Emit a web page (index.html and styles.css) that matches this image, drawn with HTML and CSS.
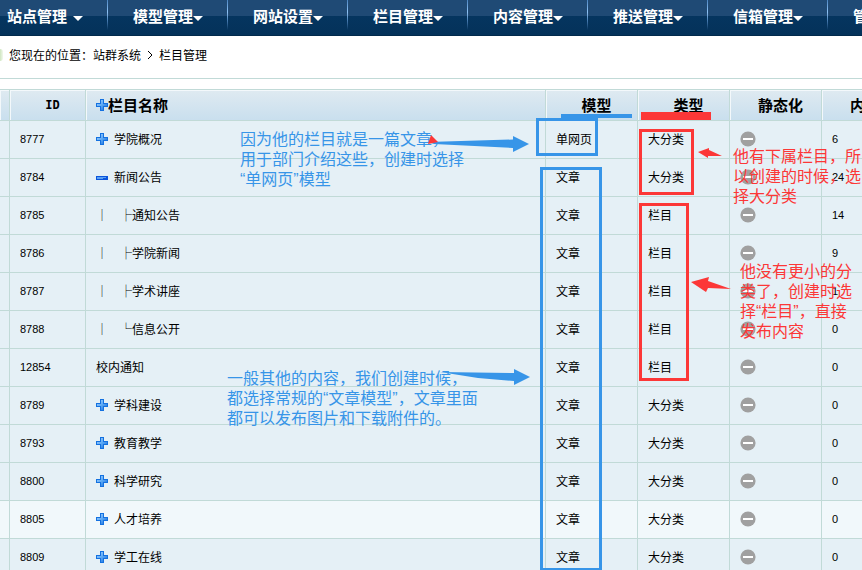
FILE: index.html
```
<!DOCTYPE html>
<html lang="zh-CN">
<head>
<meta charset="utf-8">
<title>栏目管理</title>
<link rel="stylesheet" href="styles.css">
</head>
<body>
<svg class="defs" width="0" height="0" aria-hidden="true">
  <defs>
    <linearGradient id="blue" x1="0" y1="0" x2="1" y2="1"><stop offset="0" stop-color="#a5d3ff"/><stop offset="0.5" stop-color="#5aa8f5"/><stop offset="1" stop-color="#1268d8"/></linearGradient>
    <symbol id="plus" viewBox="0 0 12 12"><path fill="#1471e0" d="M4 0h4v4h4v4H8v4H4V8H0V4h4z"/><path fill="url(#blue)" d="M5 1h2v4h4v2H7v4H5V7H1V5h4z"/></symbol>
    <symbol id="minus" viewBox="0 0 12 12"><path fill="#0b55dc" d="M0 5h12v4H0z"/><path fill="#5ba2f3" d="M1 6h9v1H7v1H1z"/></symbol>
    <symbol id="off" viewBox="0 0 16 16"><circle cx="8" cy="8" r="7.6" fill="#a0a0a0"/><path fill="#fff" d="M3 7h10v2H3z"/></symbol>
  </defs>
</svg>
<nav class="menu">
  <a class="first" href="#">站点管理<i></i></a>
  <a href="#">模型管理<i></i></a>
  <a href="#">网站设置<i></i></a>
  <a href="#">栏目管理<i></i></a>
  <a href="#">内容管理<i></i></a>
  <a href="#">推送管理<i></i></a>
  <a href="#">信箱管理<i></i></a>
  <a href="#">管理</a>
</nav>
<div class="crumbs"><span class="leaf"></span><span>您现在的位置：站群系统</span><svg width="6" height="10" viewBox="0 0 6 10"><path d="M1 1l4 4-4 4" fill="none" stroke="#000"/></svg><span>栏目管理</span></div>
<main>
<table>
  <colgroup><col class="c-edge"><col class="c-id"><col class="c-name"><col class="c-std"><col class="c-std"><col class="c-std"><col></colgroup>
  <thead>
    <tr><th></th><th class="id">ID</th><th class="name"><div class="title"><svg class="ico"><use href="#plus"/></svg>栏目名称</div></th><th>模型</th><th>类型</th><th>静态化</th><th class="last">内容数</th></tr>
  </thead>
  <tbody>
    <tr><td></td><td class="num">8777</td><td><div class="node"><svg class="ico"><use href="#plus"/></svg>学院概况</div></td><td>单网页</td><td>大分类</td><td><svg class="off"><use href="#off"/></svg></td><td class="num">6</td></tr>
    <tr><td></td><td class="num">8784</td><td><div class="node"><svg class="ico"><use href="#minus"/></svg>新闻公告</div></td><td>文章</td><td>大分类</td><td><svg class="off"><use href="#off"/></svg></td><td class="num">24</td></tr>
    <tr><td></td><td class="num">8785</td><td><b>│　├</b>通知公告</td><td>文章</td><td>栏目</td><td><svg class="off"><use href="#off"/></svg></td><td class="num">14</td></tr>
    <tr><td></td><td class="num">8786</td><td><b>│　├</b>学院新闻</td><td>文章</td><td>栏目</td><td><svg class="off"><use href="#off"/></svg></td><td class="num">9</td></tr>
    <tr><td></td><td class="num">8787</td><td><b>│　├</b>学术讲座</td><td>文章</td><td>栏目</td><td><svg class="off"><use href="#off"/></svg></td><td class="num">1</td></tr>
    <tr><td></td><td class="num">8788</td><td><b>│　└</b>信息公开</td><td>文章</td><td>栏目</td><td><svg class="off"><use href="#off"/></svg></td><td class="num">0</td></tr>
    <tr><td></td><td class="num">12854</td><td>校内通知</td><td>文章</td><td>栏目</td><td><svg class="off"><use href="#off"/></svg></td><td class="num">0</td></tr>
    <tr><td></td><td class="num">8789</td><td><div class="node"><svg class="ico"><use href="#plus"/></svg>学科建设</div></td><td>文章</td><td>大分类</td><td><svg class="off"><use href="#off"/></svg></td><td class="num">0</td></tr>
    <tr><td></td><td class="num">8793</td><td><div class="node"><svg class="ico"><use href="#plus"/></svg>教育教学</div></td><td>文章</td><td>大分类</td><td><svg class="off"><use href="#off"/></svg></td><td class="num">0</td></tr>
    <tr><td></td><td class="num">8800</td><td><div class="node"><svg class="ico"><use href="#plus"/></svg>科学研究</div></td><td>文章</td><td>大分类</td><td><svg class="off"><use href="#off"/></svg></td><td class="num">0</td></tr>
    <tr class="active"><td></td><td class="num">8805</td><td><div class="node"><svg class="ico"><use href="#plus"/></svg>人才培养</div></td><td>文章</td><td>大分类</td><td><svg class="off"><use href="#off"/></svg></td><td class="num">0</td></tr>
    <tr><td></td><td class="num">8809</td><td><div class="node"><svg class="ico"><use href="#plus"/></svg>学工在线</div></td><td>文章</td><td>大分类</td><td><svg class="off"><use href="#off"/></svg></td><td class="num">0</td></tr>
  </tbody>
</table>
</main>
<!-- Markup drawn over the table -->
<p class="note blue n1">因为他的栏目就是一篇文章，<br>用于部门介绍这些，创建时选择<br>“单网页”模型</p>
<p class="note blue n2">一般其他的内容，我们创建时候，<br>都选择常规的“文章模型”，文章里面<br>都可以发布图片和下载附件的。</p>
<p class="note red n3">他有下属栏目，所<br>以创建的时候，选<br>择大分类</p>
<p class="note red n4">他没有更小的分<br>类了，创建时选<br>择“栏目”，直接<br>发布内容</p>
<svg class="marks" width="862" height="571" viewBox="0 0 862 571" aria-hidden="true">
  <g fill="none" stroke="#3795e8" stroke-width="3"><path d="M537.5 119.500h59v35h-59z"/><path d="M541.500 168.500h59v401h-59z"/></g>
  <g fill="#3795e8"><path d="M561 114h71v4h-71z"/><path d="M428 142L513 139.500V136L529 144L513 152V148L434 144z"/><path d="M440 372L514 373V369L530 377L514 385V381L478 378z"/></g>
  <g fill="none" stroke="#fc3737" stroke-width="3"><path d="M640.500 130.500h52v63h-52z"/><path d="M640.500 204.500h47v175h-47z"/></g>
  <g fill="#fc3737"><path d="M641 112h70v8h-70z"/><path d="M428 144L431 135L438 142z"/><path d="M698 152L709 148V150L722 156L708 156V158z"/><path d="M691 282L709 277L708 281L731 289L708 288L706 292z"/></g>
</svg>
</body>
</html>
```
FILE: styles.css
```
html {
  overflow: hidden;
}
body {
  margin: 0;
  position: relative;
  background: #fff;
  color: #000;
  font: 12px/16px "Noto Sans CJK SC", sans-serif;
}
.defs {
  position: absolute;
}
.menu {
  display: flex;
  height: 36px;
  overflow: hidden;
  background: linear-gradient(#1f4a75 16px, #05355f 16px, #04325a 35px, #022a4c 35px);
}
.menu a {
  box-sizing: border-box;
  flex: 0 0 120px;
  display: flex;
  align-items: center;
  height: 32px;
  padding-left: 25px;
  color: #fff;
  font-size: 15px;
  font-weight: bold;
  text-decoration: none;
  white-space: nowrap;
  background: linear-gradient(#4d87c4, #8fc3f5 12px, #4b80b6 20px, transparent 30px) right top / 1px 30px no-repeat;
}
.menu .first {
  flex-basis: 108px;
  padding-left: 7px;
}
.menu i {
  margin-top: 4px;
  border: 5px solid transparent;
  border-top-color: #fff;
  border-bottom: 0;
}
.menu .first i {
  margin-left: 6px;
}
.crumbs {
  display: flex;
  align-items: center;
  gap: 6px;
  height: 38px;
  padding-bottom: 4px;
  border-bottom: 1px solid #c1dad7;
}
.leaf {
  width: 3px;
  height: 12px;
  border-radius: 0 6px 6px 0;
  background: linear-gradient(90deg, #cfe6c0, #f2f8ee);
}
main {
  margin-top: 10px;
  overflow: hidden;
}
table {
  width: 100%;
  min-width: 914px;
  table-layout: fixed;
  border-collapse: separate;
  border-spacing: 0;
  border-top: 1px solid #c1dad7;
}
.c-edge { width: 10px; }
.c-id { width: 76px; }
.c-name { width: 460px; }
.c-std { width: 92px; }
th,
td {
  box-sizing: border-box;
  padding: 0 0 0 10px;
  border-right: 1px solid #c1dad7;
  border-bottom: 1px solid #c1dad7;
}
th:first-child,
td:first-child {
  padding: 0;
}
th {
  height: 31px;
  font-size: 15px;
  background: linear-gradient(#dfeaf1, #c9dfee);
  box-shadow: inset 1px 1px #f3f8fb;
}
th.id {
  font: bold 12px "DejaVu Sans Mono", monospace;
}
td {
  height: 38px;
  padding: 0 0 2px 10px;
  text-align: left;
  background: #e5f0f6;
}
.active td {
  background: #f1f8fb;
}
.num {
  font: 11px "Liberation Sans", sans-serif;
}
.title,
.node {
  display: flex;
  align-items: center;
}
.node {
  gap: 6px;
}
.ico {
  width: 12px;
  height: 12px;
}
.off {
  display: block;
  width: 16px;
  height: 16px;
}
.note {
  position: absolute;
  margin: 0;
  font: 16px/20px "Liberation Sans", "Noto Sans CJK SC", sans-serif;
  white-space: nowrap;
}
.blue { color: #3795e8; }
.red { color: #fc3737; }
.n1 { left: 240px; top: 130px; }
.n2 { left: 227px; top: 369px; }
.n3 { left: 733px; top: 147px; }
.n4 { left: 740px; top: 262px; }
.marks {
  position: absolute;
  left: 0;
  top: 0;
}
```
